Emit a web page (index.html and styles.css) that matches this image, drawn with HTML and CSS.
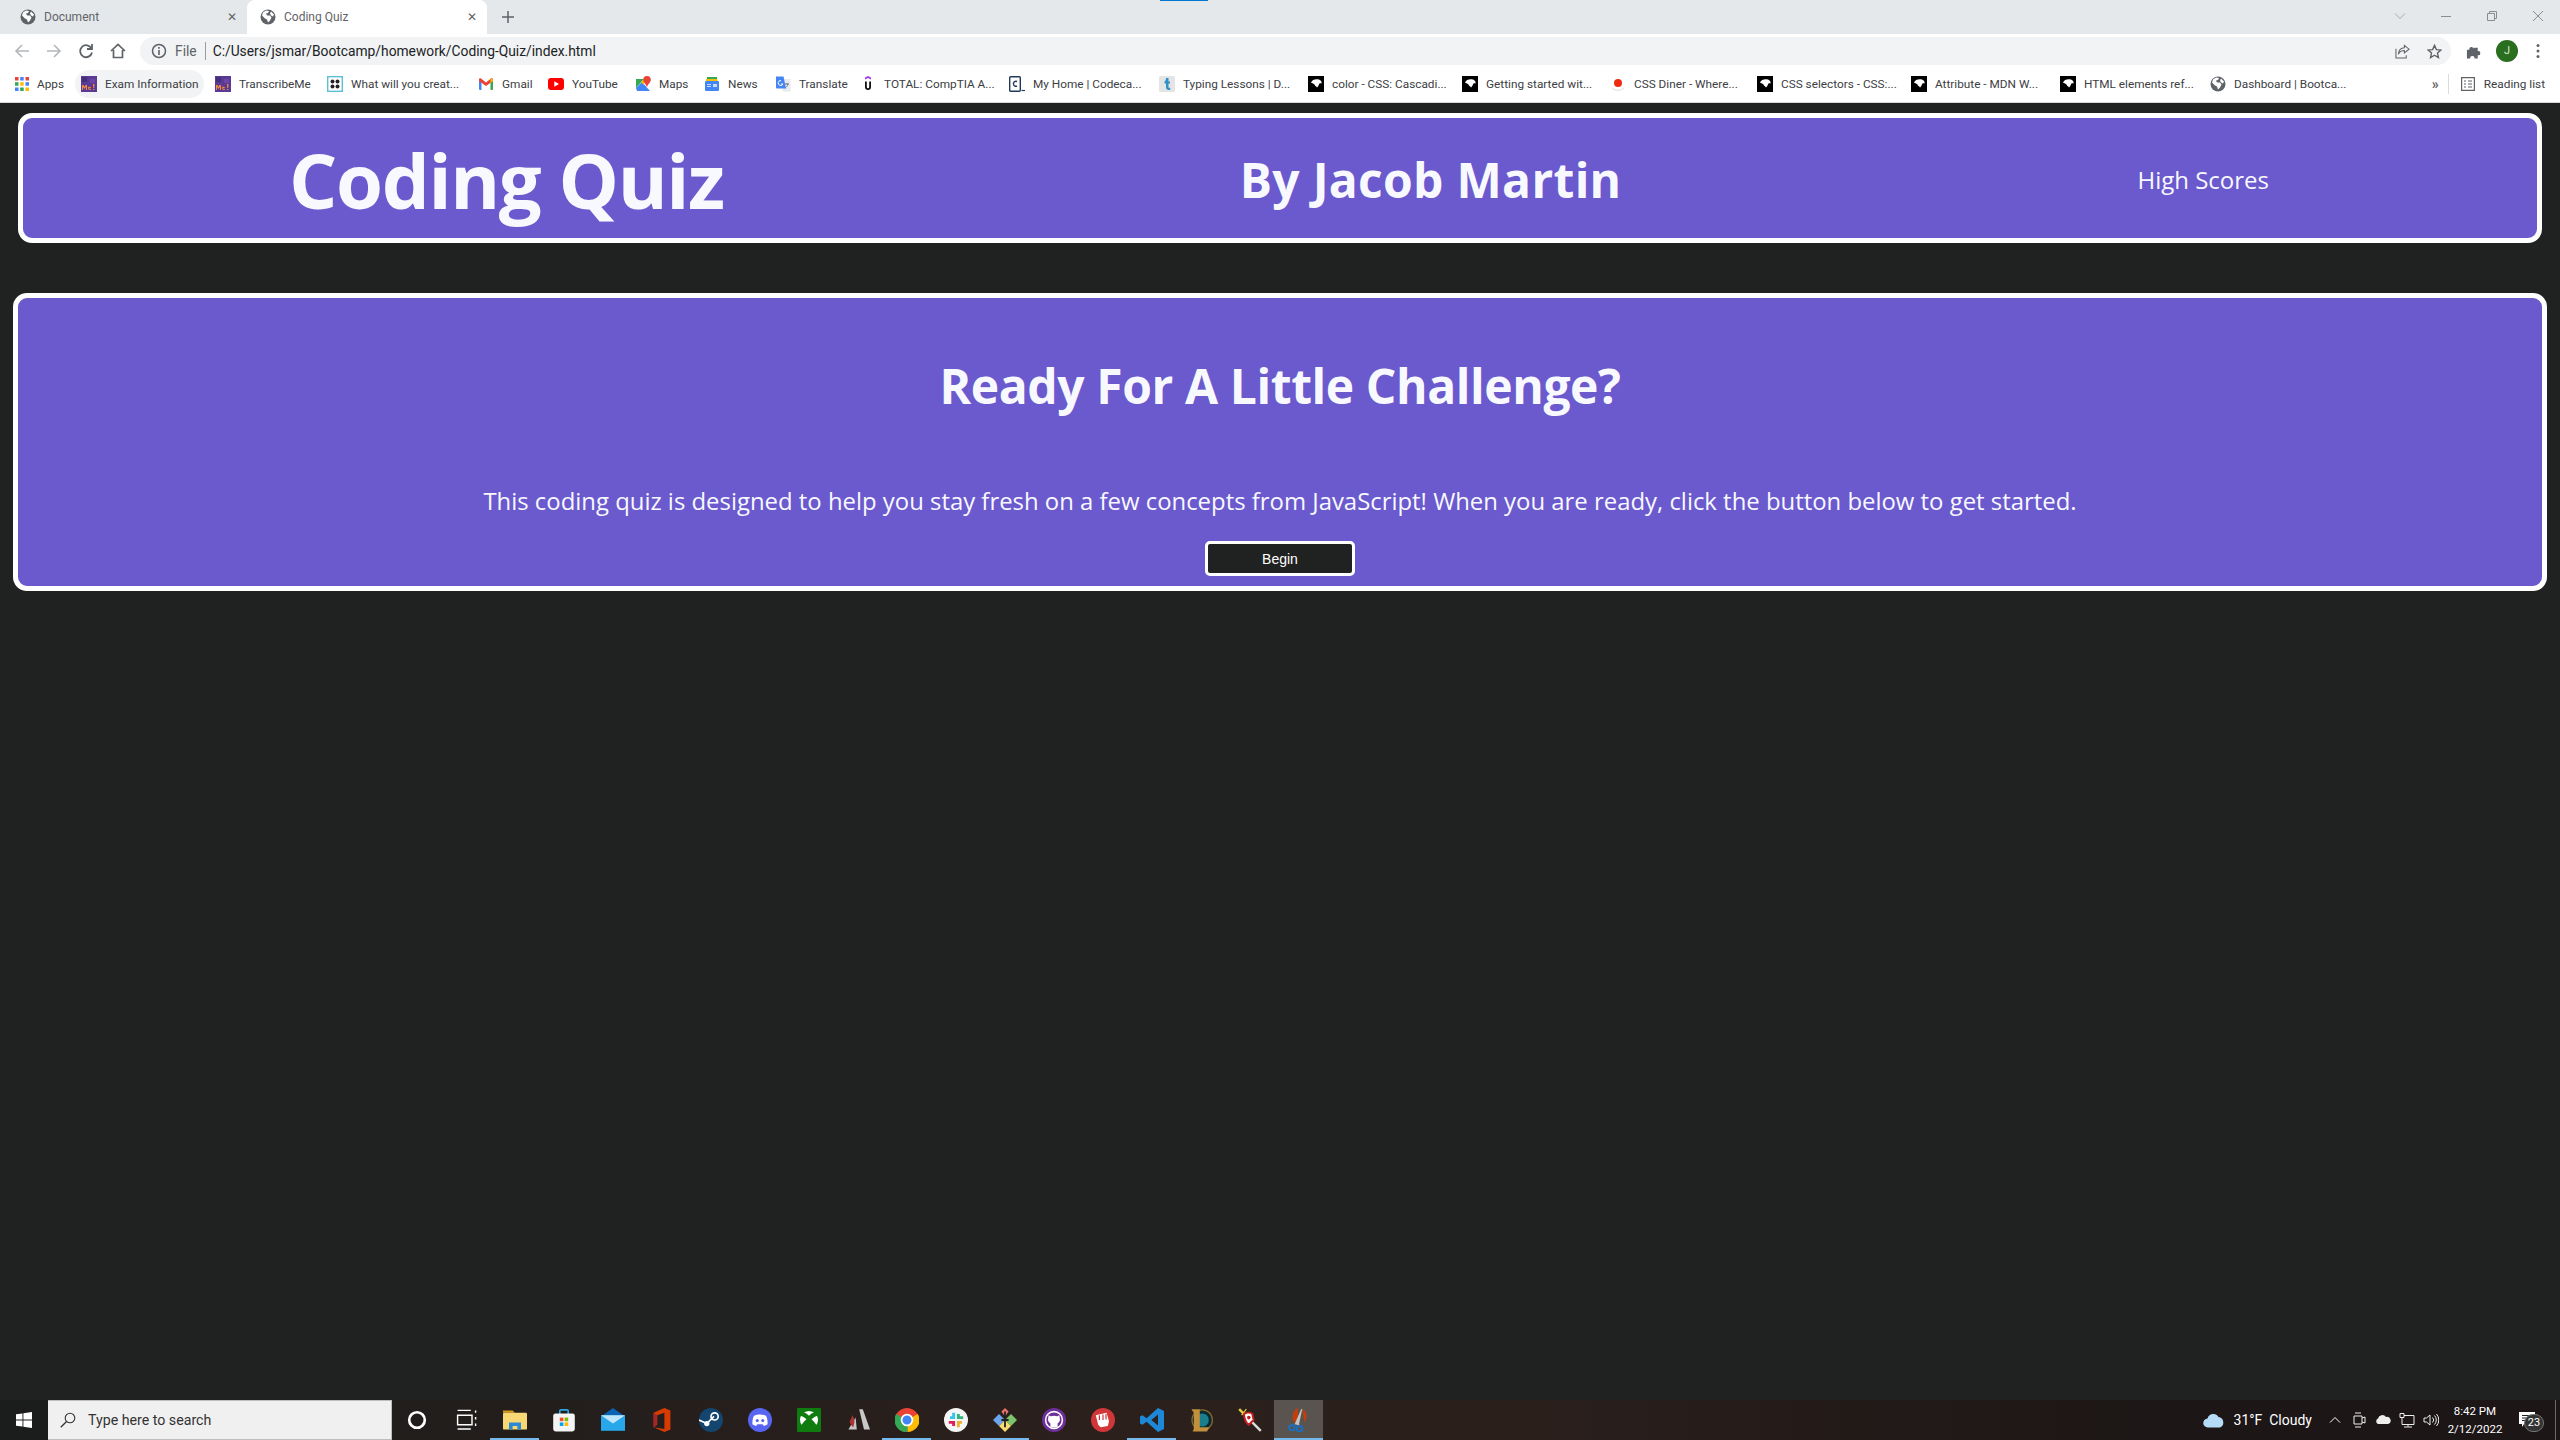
FILE: index.html
```html
<!DOCTYPE html>
<html lang="en">
<head>
    <meta charset="UTF-8">
    <meta name="viewport" content="width=device-width, initial-scale=1.0">
    <title>Coding Quiz</title>
    <link rel="stylesheet" href="styles.css">
</head>
<body>
    <svg class="defs" width="0" height="0">
        <symbol id="globe" viewBox="0 0 16 16">
            <circle cx="8" cy="8" r="7.5" fill="#5f6368"/>
            <path d="M3 3.5l3-2 3 .5-1 2-2 .5 1 2 3 0 1.500 2-1.500 3-2 2-1-3-2-1-3-3zM11 2.500l3 3-1 2-2-1-1-2z" fill="#fff"/>
        </symbol>
        <symbol id="mdn" viewBox="0 0 16 16">
            <rect width="16" height="16" fill="#000"/>
            <path d="M3 6.500C4 3.500 8 2.500 11 3.500c2 .7 3 2.500 2.500 4-.7-.5-1.500-.5-2 0-.5 1-1 2.500-2.500 4-1-1.500-2-1.500-2.500-3C5 7.500 4 7 3 6.500z" fill="#fff"/>
        </symbol>
        <symbol id="transcribe" viewBox="0 0 16 16">
            <rect width="16" height="16" fill="#5b3a94"/>
            <rect x="1" y="1" width="5" height="5" fill="#43307c"/>
            <rect x="9" y="3" width="5" height="4" fill="#6c45a6"/>
            <path d="M1 14V9h1.500l1 2 1-2H6v5H5v-3l-1.500 2-1.500-2v3zM7 11.500c0-1 3-1 3 .5H8c0 1 1 1 2 .8v1c-1.500.4-3 0-3-2.300zM12 8h1.500l-.3 4h-1zM12 13h1.300v1H12z" fill="#f08a3c"/>
        </symbol>
    </svg>

    <div class="tab-strip">
        <div class="tab">
            <svg class="fav" viewBox="0 0 16 16"><use href="#globe"/></svg>
            <span class="tab-title">Document</span>
            <span class="tab-close">✕</span>
        </div>
        <div class="tab active">
            <svg class="fav" viewBox="0 0 16 16"><use href="#globe"/></svg>
            <span class="tab-title">Coding Quiz</span>
            <span class="tab-close">✕</span>
        </div>
        <svg class="new-tab" viewBox="0 0 12 12"><path d="M6 0v12M0 6h12" stroke="#5f6368" stroke-width="1.500"/></svg>
        <div class="win-buttons">
            <svg viewBox="0 0 12 12"><path d="M1 3.500l5 5 5-5" fill="none" stroke="#a8abae"/></svg>
            <svg viewBox="0 0 12 12"><path d="M1 6.500h10" stroke="#8a8d90"/></svg>
            <svg viewBox="0 0 12 12"><path d="M1.500 3.500h7v7h-7zM3.500 3.500v-2h7v7h-2" fill="none" stroke="#8a8d90"/></svg>
            <svg viewBox="0 0 12 12"><path d="M1 1l10 10M11 1L1 11" stroke="#8a8d90"/></svg>
        </div>
        <div class="update-line"></div>
    </div>

    <div class="toolbar">
        <div class="nav-buttons">
            <svg viewBox="0 0 16 16"><path d="M15 8H2M8 2L2 8l6 6" fill="none" stroke="#b4b7ba" stroke-width="1.600"/></svg>
            <svg viewBox="0 0 16 16"><path d="M1 8h13M8 2l6 6-6 6" fill="none" stroke="#b4b7ba" stroke-width="1.600"/></svg>
            <svg viewBox="0 0 16 16"><path d="M13.500 5.500A6 6 0 1 0 14 9.500M14 1v5H9" fill="none" stroke="#5f6368" stroke-width="1.800"/></svg>
            <svg viewBox="0 0 16 16"><path d="M1 8l7-6.500L15 8M3.500 7v7.500h9V7" fill="none" stroke="#5f6368" stroke-width="1.700"/></svg>
        </div>
        <div class="omnibox">
            <svg class="info" viewBox="0 0 16 16"><circle cx="8" cy="8" r="6.500" fill="none" stroke="#5f6368" stroke-width="1.500"/><path d="M8 7v5M8 4v1.700" stroke="#5f6368" stroke-width="1.600"/></svg>
            <span class="scheme">File</span>
            <span class="url">C:/Users/jsmar/Bootcamp/homework/Coding-Quiz/index.html</span>
            <svg class="omni-icon share" viewBox="0 0 16 16"><path d="M10 1.500l5 4-5 4V7C7 7 5 8 3.500 11 4 6.500 6.500 4 10 4zM1 5v10h11v-3" fill="none" stroke="#5f6368" stroke-width="1.100"/></svg>
            <svg class="omni-icon" viewBox="0 0 16 16"><path d="M8 1.500l2 4.500 4.800.5-3.600 3.200 1 4.800L8 12l-4.200 2.500 1-4.800L1.200 6.500 6 6z" fill="none" stroke="#5f6368" stroke-width="1.500"/></svg>
        </div>
        <svg class="puzzle" viewBox="0 0 16 16"><path d="M1 6h2.500a2.300 2.300 0 1 1 4.500-1V4h4.500v3.500a2.300 2.300 0 1 1 0 4.500V15.500H9a2.300 2.300 0 1 0-4.500 0H1z" fill="#5f6368"/></svg>
        <div class="avatar">J</div>
        <svg class="kebab" viewBox="0 0 4 16"><circle cx="2" cy="2.500" r="1.500" fill="#5f6368"/><circle cx="2" cy="8" r="1.500" fill="#5f6368"/><circle cx="2" cy="13.500" r="1.500" fill="#5f6368"/></svg>
    </div>

    <div class="bookmarks">
        <div class="bookmark-list">
            <div class="bookmark">
                <svg class="fav apps" viewBox="0 0 14 14">
                    <rect width="3.500" height="3.500" fill="#ea4335"/><rect x="5.200" width="3.500" height="3.500" fill="#4285f4"/><rect x="10.500" width="3.500" height="3.500" fill="#ea4335"/>
                    <rect y="5.200" width="3.500" height="3.500" fill="#34a853"/><rect x="5.200" y="5.200" width="3.500" height="3.500" fill="#fbbc04"/><rect x="10.500" y="5.200" width="3.500" height="3.500" fill="#4285f4"/>
                    <rect y="10.500" width="3.500" height="3.500" fill="#4285f4"/><rect x="5.200" y="10.500" width="3.500" height="3.500" fill="#34a853"/><rect x="10.500" y="10.500" width="3.500" height="3.500" fill="#fbbc04"/>
                </svg>
                <span>Apps</span>
            </div>
            <div class="bookmark hovered">
                <svg class="fav" viewBox="0 0 16 16"><use href="#transcribe"/></svg>
                <span>Exam Information</span>
            </div>
            <div class="bookmark">
                <svg class="fav" viewBox="0 0 16 16"><use href="#transcribe"/></svg>
                <span>TranscribeMe</span>
            </div>
            <div class="bookmark">
                <svg class="fav" viewBox="0 0 16 16">
                    <rect x=".7" y=".7" width="14.600" height="14.600" fill="#fff" stroke="#5cc0d0" stroke-width="1.400"/>
                    <circle cx="5.500" cy="5.500" r="2" fill="#222"/><circle cx="10.500" cy="5.500" r="2" fill="#222"/><circle cx="5.500" cy="10.500" r="2" fill="#222"/><circle cx="10.500" cy="10.500" r="2" fill="#222"/>
                </svg>
                <span>What will you creat...</span>
            </div>
            <div class="bookmark">
                <svg class="fav" viewBox="0 0 16 16">
                    <path d="M1 3.500h2.500V14H2a1 1 0 0 1-1-1z" fill="#4285f4"/><path d="M12.500 3.500H15V13a1 1 0 0 1-1 1h-1.500z" fill="#34a853"/>
                    <path d="M1 3.500c0-1 1.200-1.500 2-1L8 6.500l5-4c.8-.5 2 0 2 1v1.500L8 10 1 5z" fill="#ea4335"/><path d="M12.500 2.500l2.500 1V5l-2.500 2z" fill="#fbbc04"/>
                </svg>
                <span>Gmail</span>
            </div>
            <div class="bookmark">
                <svg class="fav" viewBox="0 0 16 16"><rect y="2" width="16" height="12" rx="3" fill="#f00"/><path d="M6.300 5.200L11 8l-4.700 2.800z" fill="#fff"/></svg>
                <span>YouTube</span>
            </div>
            <div class="bookmark">
                <svg class="fav" viewBox="0 0 16 16">
                    <path d="M1 3h8L1 12z" fill="#34a853"/><path d="M1 12l6-6 8 9H2z" fill="#4285f4"/><path d="M9 3l-3 3 3 3z" fill="#fbbc04"/>
                    <path d="M12 0a3.800 3.800 0 0 1 3.800 3.800C15.800 6.500 13 8 12 11c-1-3-3.800-4.500-3.800-7.200A3.800 3.800 0 0 1 12 0z" fill="#ea4335"/>
                </svg>
                <span>Maps</span>
            </div>
            <div class="bookmark">
                <svg class="fav" viewBox="0 0 16 16">
                    <path d="M3 1h10v5H3z" fill="#34a853"/><path d="M2 3h11l1 3H2z" fill="#fbbc04"/><rect x="1" y="5" width="14" height="10" rx="1" fill="#4285f4"/>
                    <path d="M3 8h4v1H3zM3 10h4v1H3zM9 8h4v3H9z" fill="#c6dafc"/>
                </svg>
                <span>News</span>
            </div>
            <div class="bookmark">
                <svg class="fav" viewBox="0 0 16 16">
                    <path d="M7 3h8.500v12.500H8z" fill="#e8eaed"/><path d="M10 8h4M12 7v1M13 8c-.5 2-2 3.500-3 4" stroke="#777" fill="none"/>
                    <path d="M1 .5h7.500L11 12.500H2a1 1 0 0 1-1-1z" fill="#4285f4"/><path d="M6 4.500a2.500 2.500 0 1 0 2 3.500H6" stroke="#fff" fill="none"/>
                </svg>
                <span>Translate</span>
            </div>
            <div class="bookmark">
                <svg class="fav" viewBox="0 0 16 16">
                    <path d="M5 1.500L8 0l3 1.500v2L8 2 5 3.500z" fill="#a435f0"/><path d="M5 5.500h1.800v5.500a1.200 1.200 0 0 0 2.400 0V5.500H11v5.500a3 3 0 0 1-6 0z" fill="#111"/>
                </svg>
                <span>TOTAL: CompTIA A...</span>
            </div>
            <div class="bookmark">
                <svg class="fav" viewBox="0 0 16 16">
                    <rect x=".7" y=".7" width="10.600" height="14.600" rx="1" fill="#fff" stroke="#1f3a5a" stroke-width="1.400"/>
                    <path d="M8 5.500a2.500 2.500 0 1 0 0 4.500" fill="none" stroke="#1f3a5a" stroke-width="1.400"/><path d="M12.500 14.500H16" stroke="#1f3a5a" stroke-width="1.200"/>
                </svg>
                <span>My Home | Codeca...</span>
            </div>
            <div class="bookmark">
                <svg class="fav" viewBox="0 0 16 16">
                    <rect width="16" height="16" rx="1.500" fill="#e4e4e4"/><path d="M7 2h2.500v3.500H11v2H9.500V11c0 1 1 1 1.700.8v2c-2 .5-4.200 0-4.200-2.500V7.500H5.500v-2C6.500 5 7 3.500 7 2z" fill="#2f8fc8"/>
                </svg>
                <span>Typing Lessons | D...</span>
            </div>
            <div class="bookmark">
                <svg class="fav" viewBox="0 0 16 16"><use href="#mdn"/></svg>
                <span>color - CSS: Cascadi...</span>
            </div>
            <div class="bookmark">
                <svg class="fav" viewBox="0 0 16 16"><use href="#mdn"/></svg>
                <span>Getting started wit...</span>
            </div>
            <div class="bookmark">
                <svg class="fav" viewBox="0 0 16 16"><path d="M2 12c3 3 9 3 12 0" fill="none" stroke="#ddd"/><circle cx="8" cy="7" r="4" fill="#ee2a12"/></svg>
                <span>CSS Diner - Where...</span>
            </div>
            <div class="bookmark">
                <svg class="fav" viewBox="0 0 16 16"><use href="#mdn"/></svg>
                <span>CSS selectors - CSS:...</span>
            </div>
            <div class="bookmark">
                <svg class="fav" viewBox="0 0 16 16"><use href="#mdn"/></svg>
                <span>Attribute - MDN W...</span>
            </div>
            <div class="bookmark">
                <svg class="fav" viewBox="0 0 16 16"><use href="#mdn"/></svg>
                <span>HTML elements ref...</span>
            </div>
            <div class="bookmark">
                <svg class="fav" viewBox="0 0 16 16"><use href="#globe"/></svg>
                <span>Dashboard | Bootca...</span>
            </div>
        </div>
        <div class="bookmarks-end">
            <span class="more">»</span>
            <div class="bar-sep"></div>
            <svg class="fav reading" viewBox="0 0 14 14"><path d="M.6.600h12.800v12.800H.6zM3 4h2M3 7h2M3 10h2M7 4h4M7 7h4M7 10h4" fill="none" stroke="#5f6368" stroke-width="1.200"/></svg>
            <span>Reading list</span>
        </div>
    </div>

    <div class="page">
        <header class="quiz-header">
            <h1>Coding Quiz</h1>
            <h2>By Jacob Martin</h2>
            <a class="scores-link">High Scores</a>
        </header>
        <main class="quiz-card">
            <h2 class="quiz-title">Ready For A Little Challenge?</h2>
            <p class="quiz-intro">This coding quiz is designed to help you stay fresh on a few concepts from JavaScript! When you are ready, click the button below to get started.</p>
            <button class="begin-btn">Begin</button>
        </main>
    </div>

    <footer class="taskbar">
        <div class="start">
            <svg viewBox="0 0 16 16"><path d="M0 2.300L6.500 1.400v6.100H0zM7.400 1.300L16 0v7.500H7.400zM0 8.500h6.500v6.100L0 13.700zM7.400 8.500H16V16l-8.600-1.300z" fill="#fff"/></svg>
        </div>
        <div class="search-box">
            <svg viewBox="0 0 16 16"><circle cx="10" cy="6" r="4.800" fill="none" stroke="#333" stroke-width="1.100"/><path d="M6.500 9.500L.8 15.300" stroke="#333" stroke-width="1.300"/></svg>
            <span>Type here to search</span>
        </div>
        <div class="task-apps">
            <div class="task-app"><svg viewBox="0 0 20 20"><circle cx="10" cy="10" r="6.500" fill="none" stroke="#fff" stroke-width="2.200"/></svg></div>
            <div class="task-app"><svg viewBox="0 0 20 20"><path d="M3 2h11M3 17.500h11M3 6h12v8H3zM18 2v2M18 7.500v2M18 13v2" fill="none" stroke="#fff" stroke-width="1.200"/></svg></div>
            <div class="task-app open"><svg viewBox="0 0 20 20"><path d="M0 2h8l2 2H0z" fill="#d69c16"/><rect y="4" width="20" height="14" rx="1" fill="#f8d775"/><path d="M5 18v-6h10v6h-3v-3H8v3z" fill="#2a8ad4"/></svg></div>
            <div class="task-app"><svg viewBox="0 0 20 20"><path d="M6.500 5V2.500a1 1 0 0 1 1-1h5a1 1 0 0 1 1 1V5" fill="none" stroke="#2aa7e0" stroke-width="1.400"/><rect x="1" y="4.500" width="18" height="15" rx="2" fill="#f4f4f4"/><rect x="6.500" y="8" width="3" height="3" fill="#f25022"/><rect x="10.500" y="8" width="3" height="3" fill="#7fba00"/><rect x="6.500" y="12" width="3" height="3" fill="#00a4ef"/><rect x="10.500" y="12" width="3" height="3" fill="#ffb900"/></svg></div>
            <div class="task-app"><svg viewBox="0 0 20 20"><path d="M10 0l10 7H0z" fill="#0a64b4"/><rect y="6" width="20" height="13" fill="#28a8ea"/><path d="M0 6l10 7 10-7" fill="#bfe6fa"/></svg></div>
            <div class="task-app"><svg viewBox="0 0 20 20"><path d="M3 4l9-4 5 2v16l-5 2-9-4 9 1.500V4L6 6v8l-3 2z" fill="#d83b01"/><path d="M3 4l3 2v8l-3 2z" fill="#a4262c"/></svg></div>
            <div class="task-app"><svg viewBox="0 0 20 20"><circle cx="10" cy="10" r="10" fill="#14456e"/><circle cx="13" cy="7" r="3" fill="none" stroke="#fff" stroke-width="1.400"/><circle cx="6.500" cy="13" r="2.200" fill="#fff"/><path d="M0 10l6.500 3 6-6" fill="none" stroke="#fff" stroke-width="1.400"/></svg></div>
            <div class="task-app"><svg viewBox="0 0 20 20"><circle cx="10" cy="10" r="10" fill="#5865f2"/><path d="M5 6.500c3-1.500 7-1.500 10 0 1 2 1.500 4.500 1.300 7-1.500 1-2.500 1.300-3.300 1.300l-.8-1.300H7.800L7 14.800c-.8 0-1.800-.3-3.300-1.300C3.500 11 4 8.500 5 6.500z" fill="#fff"/><circle cx="7.700" cy="10.500" r="1.300" fill="#5865f2"/><circle cx="12.300" cy="10.500" r="1.300" fill="#5865f2"/></svg></div>
            <div class="task-app"><svg viewBox="0 0 20 20"><rect width="20" height="20" rx="1" fill="#107c10"/><circle cx="10" cy="10" r="7.500" fill="#fff"/><path d="M5 3.500c2 0 4 2 5 3 1-1 3-3 5-3l2 3c-3 1-5 3-7 5-2-2-4-4-7-5zM3.500 15.500c.5-2.500 4-6 6.500-7.500 2.500 1.500 6 5 6.500 7.500L13 19H7z" fill="#107c10"/></svg></div>
            <div class="task-app"><svg viewBox="0 0 20 20"><path d="M11 1h3l6 17h-5zM2 18L8 8l1 10z" fill="#c8c8c8"/><path d="M3 11c1-2 2-3 2-5 2 2 2 4 2 6l-1 4c-1-1-3-3-3-5z" fill="#a33"/></svg></div>
            <div class="task-app open"><svg viewBox="0 0 20 20"><circle cx="10" cy="10" r="10" fill="#ea4335"/><path d="M10 10L19 5a10 10 0 0 1-8.500 15z" fill="#fbbc04"/><path d="M10 10L10.500 20A10 10 0 0 1 1 5z" fill="#34a853"/><circle cx="10" cy="10" r="4.500" fill="#4285f4" stroke="#fff" stroke-width="1.500"/></svg></div>
            <div class="task-app"><svg viewBox="0 0 20 20"><circle cx="10" cy="10" r="10" fill="#f5f5f5"/><path d="M8 4v4H5" stroke="#36c5f0" stroke-width="2.400" fill="none"/><path d="M16 8h-4V5" stroke="#2eb67d" stroke-width="2.400" fill="none"/><path d="M12 16v-4h3" stroke="#ecb22e" stroke-width="2.400" fill="none"/><path d="M4 12h4v3" stroke="#e01e5a" stroke-width="2.400" fill="none"/></svg></div>
            <div class="task-app open"><svg viewBox="0 0 20 20"><path d="M5 5l5 5-5 5-5-5z" fill="#6aa5ee"/><path d="M15 5l5 5-5 5-5-5z" fill="#7ec46a"/><path d="M10 10l5 5-5 5-5-5z" fill="#f7dc6f"/><path d="M7 3l3-3 3 3-3 4z" fill="#e8736c"/><path d="M10 3v13M7 10h6" stroke="#222" stroke-width="1.500"/></svg></div>
            <div class="task-app"><svg viewBox="0 0 20 20"><circle cx="10" cy="10" r="10" fill="#6e2f9b"/><circle cx="10" cy="10" r="7" fill="none" stroke="#fff" stroke-width="1.300"/><path d="M7 16v-3c-1-1-2-2-2-3.500L5.500 6 7.500 6.800a8 8 0 0 1 5 0L14.500 6 15 9.500c0 1.500-1 2.500-2 3.500v3z" fill="#fff"/></svg></div>
            <div class="task-app"><svg viewBox="0 0 20 20"><circle cx="10" cy="10" r="10" fill="#d13639"/><path d="M4 6l9-2 2 7-1 4-6 1-2-2z" fill="#fff"/><path d="M7 6v4M10 5.500v4.500M12.500 5v4.500" stroke="#d13639"/></svg></div>
            <div class="task-app open"><svg viewBox="0 0 20 20"><path d="M15 0l5 2.500v15L15 20 5.500 11.500 2 14l-2-1V7l2-1 3.500 2.500zM15 5.500L9.500 10l5.500 4.500z" fill="#1e88d8"/></svg></div>
            <div class="task-app"><svg viewBox="0 0 20 20"><circle cx="11" cy="10" r="8.500" fill="#0a2a33" stroke="#8a6a2c"/><circle cx="11" cy="10" r="5.500" fill="#1b7e8c"/><path d="M2 1h7v15h8l-2 3.500H3l1-2V4z" fill="#c28f3d"/></svg></div>
            <div class="task-app"><svg viewBox="0 0 20 20"><path d="M8 8l11 11" stroke="#ddd" stroke-width="2"/><path d="M1 1l6 6" stroke="#e6cf45" stroke-width="2"/><path d="M3 6l4-5" stroke="#e6cf45"/><path d="M5 5c3-2 6-1 7 0l1 5-4 4c-2-1-4-5-4-9z" fill="#fff" stroke="#c51c1c" stroke-width="1.600"/><circle cx="9" cy="8" r="1.500" fill="#c51c1c"/></svg></div>
            <div class="task-app active"><svg viewBox="0 0 20 22"><path d="M9 0a6 11 0 0 0-5 8c0 3 2 6 5 7zM13 1a6 8 0 0 1 4 7c0 2-1 3-2 5z" fill="#c43e0c"/><path d="M12 1l1 0-3 14 1 1L6 15z" fill="#c4c4c4"/><circle cx="3.500" cy="18" r="2.500" fill="none" stroke="#1a6fc0" stroke-width="1.800"/><circle cx="10.500" cy="19" r="2.500" fill="none" stroke="#1a6fc0" stroke-width="1.800"/></svg></div>
        </div>
        <div class="tray">
            <svg class="weather" viewBox="0 0 22 15"><path d="M5 14.500a4.500 4.500 0 0 1-.5-9A6 6 0 0 1 15.500 4 5.500 5.500 0 0 1 17 14.500z" fill="#b5dcf7"/></svg>
            <span class="weather-text">31°F&nbsp; Cloudy</span>
            <svg class="tray-chevron" viewBox="0 0 12 12"><path d="M1 8.500l5-5 5 5" fill="none" stroke="#fff"/></svg>
            <svg class="tray-icon" viewBox="0 0 16 16"><path d="M4 1h6M4 15h6M3 4h8v8H3zM11 6l3-1v6l-3-1" fill="none" stroke="#eee"/></svg>
            <svg class="tray-icon" viewBox="0 0 16 16"><path d="M3 12a3 3 0 0 1 0-5.500 4.500 4.500 0 0 1 8-1.500 3.500 3.500 0 0 1 2 7z" fill="#eee"/></svg>
            <svg class="tray-icon" viewBox="0 0 16 16"><path d="M1 1.500h4v4H1zM5 3.500h10v9H3V5.500M9 12.500v2M5 15h8" fill="none" stroke="#eee"/></svg>
            <svg class="tray-icon" viewBox="0 0 16 16"><path d="M1 6h2.500L7 3v10l-3.500-3H1zM9.500 5.500a3.500 3.500 0 0 1 0 5M11.500 3.500a6.500 6.500 0 0 1 0 9M13.500 2a9 9 0 0 1 0 12" fill="none" stroke="#eee"/></svg>
            <div class="clock">
                <span>8:42 PM</span>
                <span>2/12/2022</span>
            </div>
            <div class="notify">
                <svg viewBox="0 0 16 16"><path d="M0 0h16v12H5l-2 3v-3H0z" fill="#fff"/><path d="M3 3.500h10M3 6h10M3 8.500h10" stroke="#222"/></svg>
                <span class="notify-badge">23</span>
            </div>
            <div class="show-desktop"></div>
        </div>
    </footer>
</body>
</html>
```

FILE: styles.css
```css
* {
    box-sizing: border-box;
}

body {
    margin: 0;
    height: 100vh;
    display: flex;
    flex-direction: column;
    background-color: #202221;
    font-family: 'Open Sans', sans-serif;
    overflow: hidden;
}

.defs {
    position: absolute;
}

/* browser window */
.tab-strip {
    position: relative;
    height: 34px;
    display: flex;
    align-items: center;
    padding-left: 7px;
    background-color: #e5e8eb;
}

.tab {
    width: 240px;
    height: 34px;
    display: flex;
    align-items: center;
    padding: 0 10px 0 13px;
    font: 12px Roboto, sans-serif;
    color: #5f6368;
}

.tab.active {
    background-color: #fff;
    border-radius: 8px 8px 0 0;
}

.fav {
    width: 16px;
    height: 16px;
    flex: none;
}

.tab-title {
    flex: 1;
    margin-left: 8px;
}

.tab-close {
    font-size: 12px;
    color: #5f6368;
}

.new-tab {
    width: 12px;
    height: 12px;
    margin-left: 15px;
}

.win-buttons {
    margin-left: auto;
    display: flex;
    gap: 34px;
    padding-right: 16px;
}

.win-buttons svg {
    width: 12px;
    height: 12px;
    margin-top: -2px;
}

.update-line {
    position: absolute;
    top: 0;
    left: 1160px;
    width: 48px;
    height: 1px;
    background-color: #0078d4;
}

.toolbar {
    height: 34px;
    display: flex;
    align-items: center;
    background-color: #fff;
}

.nav-buttons {
    width: 140px;
    display: flex;
    gap: 16px;
    padding-left: 14px;
}

.nav-buttons svg {
    width: 16px;
    height: 16px;
}

.omnibox {
    width: 2311px;
    height: 28px;
    display: flex;
    align-items: center;
    padding: 0 9px 0 11px;
    border-radius: 14px;
    background-color: #f1f3f4;
    font: 13.8px Roboto, sans-serif;
    color: #202124;
}

.info {
    width: 16px;
    height: 16px;
}

.scheme {
    margin-left: 8px;
    padding-right: 8px;
    border-right: 1px solid #9a9da0;
    line-height: 18px;
    color: #5f6368;
}

.url {
    flex: 1;
    margin-left: 7px;
}

.omni-icon {
    width: 15px;
    height: 15px;
}

.share {
    margin-right: 17px;
}

.puzzle {
    width: 15px;
    height: 15px;
    margin-left: 15px;
}

.avatar {
    width: 22px;
    height: 22px;
    margin-left: 15px;
    border-radius: 50%;
    background-color: #2a6e1f;
    color: #d5e8cf;
    font: 11px/22px Roboto, sans-serif;
    text-align: center;
}

.kebab {
    width: 4px;
    height: 16px;
    margin-left: 18px;
}

.bookmarks {
    height: 35px;
    display: flex;
    justify-content: space-between;
    align-items: center;
    padding: 0 15px 2px 9px;
    background-color: #fff;
    border-bottom: 1px solid #d9d9d9;
    font: 11.8px Roboto, sans-serif;
    color: #3c4043;
}

.bookmark-list {
    display: grid;
    grid-template-columns: 66px 134px 112px 151px 70px 87px 69px 71px 85px 149px 150px 149px 154px 148px 147px 154px 149px 150px 150px;
}

.bookmark {
    height: 28px;
    display: flex;
    align-items: center;
    gap: 8px;
    padding: 0 6px;
    white-space: nowrap;
}

.bookmark.hovered {
    width: 129px;
    border-radius: 14px;
    background-color: #f1f3f4;
}

.apps {
    width: 14px;
    height: 14px;
}

.bookmarks-end {
    display: flex;
    align-items: center;
}

.more {
    margin-right: 9px;
    font-size: 14px;
    font-weight: bold;
    color: #5f6368;
}

.bar-sep {
    width: 1px;
    height: 20px;
    margin-right: 12px;
    background-color: #d9dbdd;
}

.reading {
    width: 14px;
    height: 14px;
    margin-right: 9px;
}

/* the quiz page itself */
.page {
    flex: 1;
    padding: 10px 13px 0;
    color: ghostwhite;
}

.quiz-header {
    height: 130px;
    margin: 0 5px;
    padding: 2px 268px 0 266px;
    display: flex;
    align-items: center;
    justify-content: space-between;
    background-color: slateblue;
    border: 5px solid #fff;
    border-radius: 14px;
}

h1 {
    margin: 0;
    font-size: 76px;
    font-weight: 700;
    letter-spacing: -1.4px;
}

.quiz-header h2 {
    margin: 0;
    font-size: 48px;
    font-weight: 700;
    letter-spacing: .3px;
}

.scores-link {
    font-size: 24px;
}

.quiz-card {
    height: 298px;
    margin-top: 50px;
    display: flex;
    flex-direction: column;
    align-items: center;
    background-color: slateblue;
    border: 5px solid #fff;
    border-radius: 14px;
    text-align: center;
}

.quiz-title {
    margin: 55px 0 0;
    font-size: 48px;
    font-weight: 700;
    letter-spacing: -.4px;
}

.quiz-intro {
    margin: 66px 0 0;
    font-size: 23.9px;
}

.begin-btn {
    width: 150px;
    height: 35px;
    margin-top: 24px;
    background-color: #202221;
    border: 3px solid #fff;
    border-radius: 5px;
    color: #fff;
    font: 14px 'Liberation Sans', sans-serif;
}

/* windows taskbar */
.taskbar {
    height: 40px;
    display: flex;
    align-items: stretch;
    background: linear-gradient(90deg, #1b1c1c, #2c201c 45%, #2a1f1b 60%, #1c1616 85%);
    color: #fff;
    font: 14px Roboto, sans-serif;
}

.start {
    width: 48px;
    display: flex;
    align-items: center;
    justify-content: center;
}

.start svg {
    width: 16px;
    height: 16px;
}

.search-box {
    width: 344px;
    display: flex;
    align-items: center;
    gap: 12px;
    padding-left: 12px;
    background-color: #f0f0f0;
    border: 1px solid #bdbdbd;
    border-width: 1px 1px 1px 0;
    color: #333;
    font-size: 14.2px;
}

.search-box svg {
    width: 16px;
    height: 16px;
}

.task-apps {
    display: flex;
}

.task-app {
    width: 49px;
    display: flex;
    align-items: center;
    justify-content: center;
}

.task-app svg {
    width: 24px;
    height: 24px;
}

.task-app.open {
    box-shadow: inset 0 -2px 0 #76b9ed;
}

.task-app.active {
    background-color: #5a5450;
    box-shadow: inset 0 -2px 0 #76b9ed;
}

.tray {
    flex: 1;
    display: flex;
    align-items: center;
    justify-content: flex-end;
}

.weather {
    width: 22px;
    height: 15px;
    margin-right: 9px;
}

.weather-text {
    margin-right: 17px;
}

.tray-chevron {
    width: 12px;
    height: 12px;
    margin-right: 2px;
}

.tray-icon {
    width: 16px;
    height: 16px;
    margin-left: 8px;
}

.clock {
    width: 68px;
    margin-left: 2px;
    display: flex;
    flex-direction: column;
    align-items: center;
    gap: 2px;
    font-size: 11.5px;
    line-height: 16px;
}

.notify {
    position: relative;
    width: 16px;
    height: 16px;
    margin: 0 20px 0 10px;
}

.notify svg {
    width: 16px;
    height: 16px;
    display: block;
}

.notify-badge {
    position: absolute;
    top: 2px;
    left: 5px;
    width: 20px;
    height: 18px;
    border: 1px solid #777;
    border-radius: 9px;
    background-color: #333;
    font-size: 11px;
    line-height: 16px;
    text-align: center;
}

.show-desktop {
    width: 1px;
    height: 100%;
    margin-right: 4px;
    background-color: #6b6b6b;
}
```
